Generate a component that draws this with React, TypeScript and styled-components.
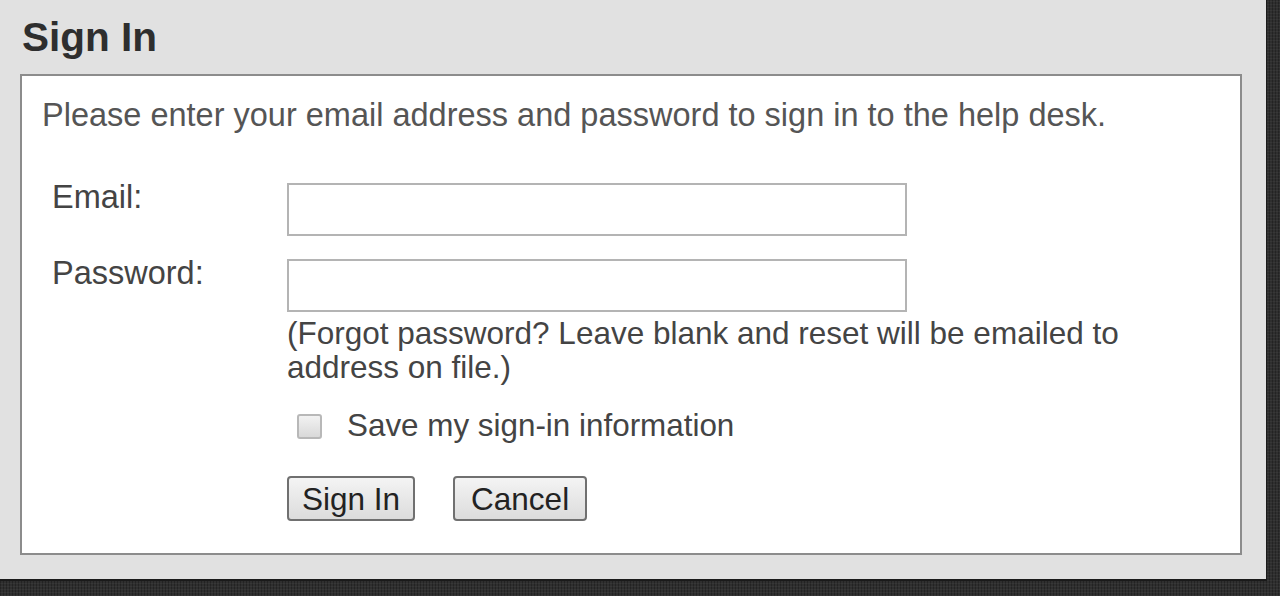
import React from "react";
import styled, { createGlobalStyle } from "styled-components";

const Global = createGlobalStyle`
  html, body { margin: 0; padding: 0; }
  body {
    width: 1280px;
    height: 596px;
    overflow: hidden;
    background-color: #2f2f2f;
    background-image: repeating-linear-gradient(0deg, rgba(255,255,255,0.04) 0 1px, transparent 1px 3px),
      repeating-linear-gradient(90deg, rgba(0,0,0,0.25) 0 1px, transparent 1px 3px);
    font-family: "Liberation Sans", Arial, sans-serif;
  }
`;

const Panel = styled.div`
  width: 1267px;
  height: 581px;
  box-sizing: border-box;
  background: #e1e1e1;
  padding: 16px 25px 0 20px;
  border-bottom: 2px solid #1a1a1a;
  border-right: 1px solid #1a1a1a;
`;

const Title = styled.h1`
  margin: 0 0 0 2px;
  font-size: 40.5px;
  line-height: 42px;
  font-weight: bold;
  color: #2e2e2e;
  height: 58px;
`;

const Box = styled.div`
  width: 1222px;
  height: 481px;
  box-sizing: border-box;
  background: #fff;
  border: 2px solid #8c8c8c;
  padding: 22px 20px 0 20px;
`;

const Intro = styled.p`
  margin: 0;
  font-size: 32.5px;
  line-height: 34px;
  color: #555;
`;

const Form = styled.form`
  display: grid;
  grid-template-columns: 235px 620px;
  margin: 51px 0 0 10px;
  color: #444;
  font-size: 32.5px;
  line-height: 34px;
`;

const Label = styled.label`
  line-height: 28px;
`;

const Field = styled.div<{ $gap?: number }>`
  margin-bottom: ${(p) => p.$gap ?? 23}px;
`;

const Input = styled.input`
  display: block;
  width: 620px;
  height: 53px;
  box-sizing: border-box;
  border: 2px solid #b4b4b4;
  background: #fff;
  font: inherit;
  margin: 0;
`;

const Help = styled.div`
  margin-top: 4px;
  width: 860px;
  font-size: 31.5px;
  color: #444;
`;

const CheckRow = styled.div`
  display: flex;
  align-items: center;
  gap: 25px;
  margin: 25px 0 0 10px;
  font-size: 31.4px;
`;

const Check = styled.span`
  display: inline-block;
  width: 25px;
  height: 25px;
  box-sizing: border-box;
  border: 2px solid #b8b8b8;
  border-radius: 3px;
  background: linear-gradient(#f2f2f2, #d9d9d9);
`;

const Buttons = styled.div`
  display: flex;
  gap: 38px;
  margin-top: 33px;
`;

const Button = styled.button<{ $pad: number }>`
  height: 45px;
  box-sizing: border-box;
  padding: 0 ${(p) => p.$pad}px;
  border: 2px solid #707070;
  border-radius: 4px;
  background: linear-gradient(#f4f4f4, #dcdcdc);
  font-family: "Liberation Sans", Arial, sans-serif;
  font-size: 31.5px;
  line-height: 36px;
  color: #222;
`;

export default function App() {
  return (
    <>
      <Global />
      <Panel>
        <Title>Sign In</Title>
        <Box>
          <Intro>Please enter your email address and password to sign in to the help desk.</Intro>
          <Form onSubmit={(e) => e.preventDefault()}>
            <Label htmlFor="email">Email:</Label>
            <Field>
              <Input id="email" type="text" />
            </Field>
            <Label htmlFor="pw">Password:</Label>
            <Field $gap={0}>
              <Input id="pw" type="password" />
              <Help>(Forgot password? Leave blank and reset will be emailed to address on file.)</Help>
              <CheckRow>
                <Check />
                <span>Save my sign-in information</span>
              </CheckRow>
              <Buttons>
                <Button type="button" $pad={13}>Sign In</Button>
                <Button type="button" $pad={16}>Cancel</Button>
              </Buttons>
            </Field>
          </Form>
        </Box>
      </Panel>
    </>
  );
}
